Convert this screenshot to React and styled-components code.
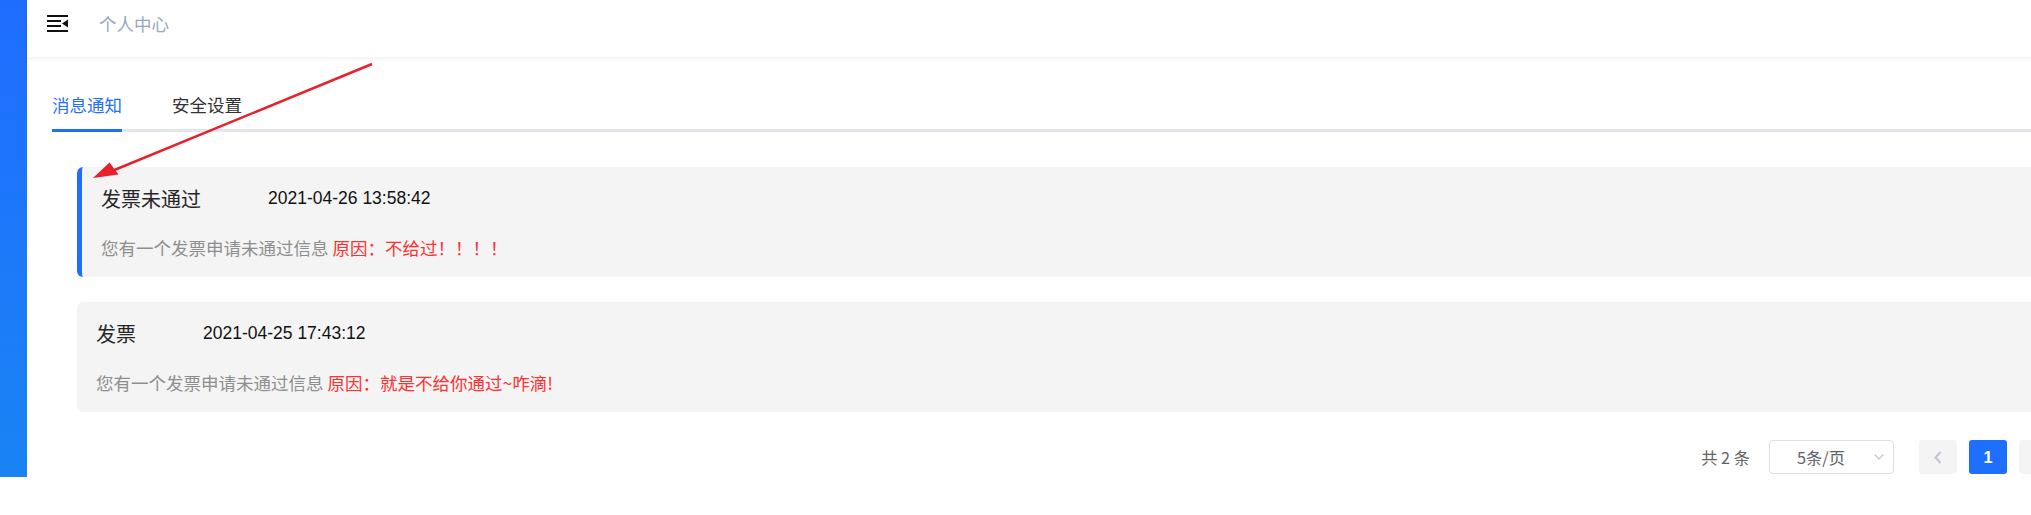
import React from 'react';
import styled, { createGlobalStyle } from 'styled-components';

const BLUE = '#1f6fff';

const GlobalStyle = createGlobalStyle`
  html, body {
    margin: 0;
    padding: 0;
    overflow: hidden;
    background: #fff;
  }
  body {
    font-family: "Noto Sans CJK SC", "Liberation Sans", sans-serif;
  }
`;

const messages = [
  {
    id: 1,
    title: '发票未通过',
    time: '2021-04-26 13:58:42',
    text: '您有一个发票申请未通过信息',
    reason: '原因：不给过！！！！',
    unread: true,
  },
  {
    id: 2,
    title: '发票',
    time: '2021-04-25 17:43:12',
    text: '您有一个发票申请未通过信息',
    reason: '原因：就是不给你通过~咋滴!',
    unread: false,
  },
];

const App = () => {
  return (
    <>
      <GlobalStyle />
      <Layout>
        <Sidebar />
        <Main>
          <Navbar>
            <FoldIcon />
            <Breadcrumb>个人中心</Breadcrumb>
          </Navbar>
          <Content>
            <TabNav>
              <Tab active>消息通知</Tab>
              <Tab>安全设置</Tab>
            </TabNav>
            <MessageList>
              {messages.map((msg) => (
                <Card key={msg.id} unread={msg.unread}>
                  <CardHead>
                    <CardTitle>{msg.title}</CardTitle>
                    <CardTime>{msg.time}</CardTime>
                  </CardHead>
                  <CardText>
                    {msg.text} <Reason>{msg.reason}</Reason>
                  </CardText>
                </Card>
              ))}
            </MessageList>
            <Pagination>
              <Total>共 2 条</Total>
              <SizeSelect>
                <span>5条/页</span>
                <svg width="10" height="6" viewBox="0 0 10 6">
                  <path d="M0.5 0.5 L5 5 L9.5 0.5" fill="none" stroke="#c0c4cc" strokeWidth="1.2" />
                </svg>
              </SizeSelect>
              <PageButton>
                <svg width="8" height="13" viewBox="0 0 8 13">
                  <path d="M6.5 1 L1.5 6.5 L6.5 12" fill="none" stroke="#c0c4cc" strokeWidth="2" />
                </svg>
              </PageButton>
              <PageButton active>1</PageButton>
              <PageButton>
                <svg width="8" height="13" viewBox="0 0 8 13">
                  <path d="M1.5 1 L6.5 6.5 L1.5 12" fill="none" stroke="#c0c4cc" strokeWidth="2" />
                </svg>
              </PageButton>
            </Pagination>
          </Content>
        </Main>
      </Layout>
      <Annotation width="2031" height="515" viewBox="0 0 2031 515">
        <line x1="372" y1="64" x2="112" y2="171" stroke="#e8202a" strokeWidth="2.5" />
        <polygon points="93,178 118.5,174.5 109.5,162.5" fill="#e8202a" />
      </Annotation>
    </>
  );
};

const FoldIcon = () => (
  <svg width="21" height="17" viewBox="0 0 21 17">
    <rect x="0" y="0" width="21" height="2" fill="#111" />
    <rect x="0" y="5" width="14" height="2" fill="#111" />
    <rect x="0" y="10" width="14" height="2" fill="#111" />
    <rect x="0" y="15" width="21" height="2" fill="#111" />
    <polygon points="15,8.5 21,4.5 21,12.5" fill="#111" />
  </svg>
);

const Layout = styled.div`
  display: flex;
  width: 2082px;
  height: 477px;
`;

const Sidebar = styled.aside`
  width: 27px;
  flex-shrink: 0;
  background: linear-gradient(180deg, #1f6dff 0%, #1a84f4 100%);
`;

const Main = styled.div`
  flex: 1;
  display: flex;
  flex-direction: column;
  min-width: 0;
`;

const Navbar = styled.div`
  box-sizing: border-box;
  height: 57px;
  display: flex;
  align-items: flex-start;
  padding: 15px 0 0 20px;
  gap: 31px;
  box-shadow: 0 1px 5px rgba(0, 21, 41, 0.07);
  position: relative;
`;

const Breadcrumb = styled.span`
  font-size: 17.5px;
  color: #97a8be;
  line-height: 17.5px;
  margin-top: 0;
`;

const Content = styled.div`
  padding: 24px 25px 0 25px;
`;

const TabNav = styled.div`
  display: flex;
  gap: 50px;
  border-bottom: 3px solid #e2e5ee;
`;

const Tab = styled.div`
  height: 48px;
  line-height: 48px;
  font-size: 17.5px;
  color: ${(p) => (p.active ? BLUE : '#303133')};
  border-bottom: 3px solid ${(p) => (p.active ? BLUE : 'transparent')};
  margin-bottom: -3px;
`;

const MessageList = styled.div`
  display: flex;
  flex-direction: column;
  gap: 25px;
  margin-top: 35px;
  padding-left: 25px;
`;

const Card = styled.div`
  background: #f4f4f4;
  border-radius: 6px;
  border-left: ${(p) => (p.unread ? `5px solid ${BLUE}` : 'none')};
  padding: 16px 19px;
`;

const CardHead = styled.div`
  display: flex;
  align-items: center;
  height: 30px;
`;

const CardTitle = styled.span`
  font-size: 20px;
  color: #262626;
  margin-right: 67px;
`;

const CardTime = styled.span`
  font-family: "Liberation Sans", Arial, sans-serif;
  font-size: 17.5px;
  color: #111;
`;

const CardText = styled.div`
  margin-top: 22px;
  font-size: 17.5px;
  line-height: 26px;
  color: #8e8e8e;
`;

const Reason = styled.span`
  color: #ff3030;
`;

const Pagination = styled.div`
  display: flex;
  justify-content: flex-end;
  align-items: center;
  margin-top: 28px;
`;

const Total = styled.span`
  font-size: 16.25px;
  color: #606266;
  margin-right: 19px;
  white-space: pre;
`;

const SizeSelect = styled.div`
  box-sizing: border-box;
  width: 125px;
  height: 34px;
  border: 1px solid #dcdfe6;
  border-radius: 4px;
  display: flex;
  align-items: center;
  justify-content: space-between;
  padding: 0 9px 0 27px;
  margin-right: 25px;
  font-size: 16.25px;
  color: #606266;
`;

const PageButton = styled.div`
  width: 38px;
  height: 34px;
  border-radius: 3px;
  display: flex;
  align-items: center;
  justify-content: center;
  flex-shrink: 0;
  background: ${(p) => (p.active ? BLUE : '#f4f4f5')};
  color: #fff;
  font-family: "Liberation Sans", Arial, sans-serif;
  font-weight: bold;
  font-size: 16.25px;
  & + & {
    margin-left: 12px;
  }
`;

const Annotation = styled.svg`
  position: absolute;
  left: 0;
  top: 0;
  pointer-events: none;
`;

export default App;
